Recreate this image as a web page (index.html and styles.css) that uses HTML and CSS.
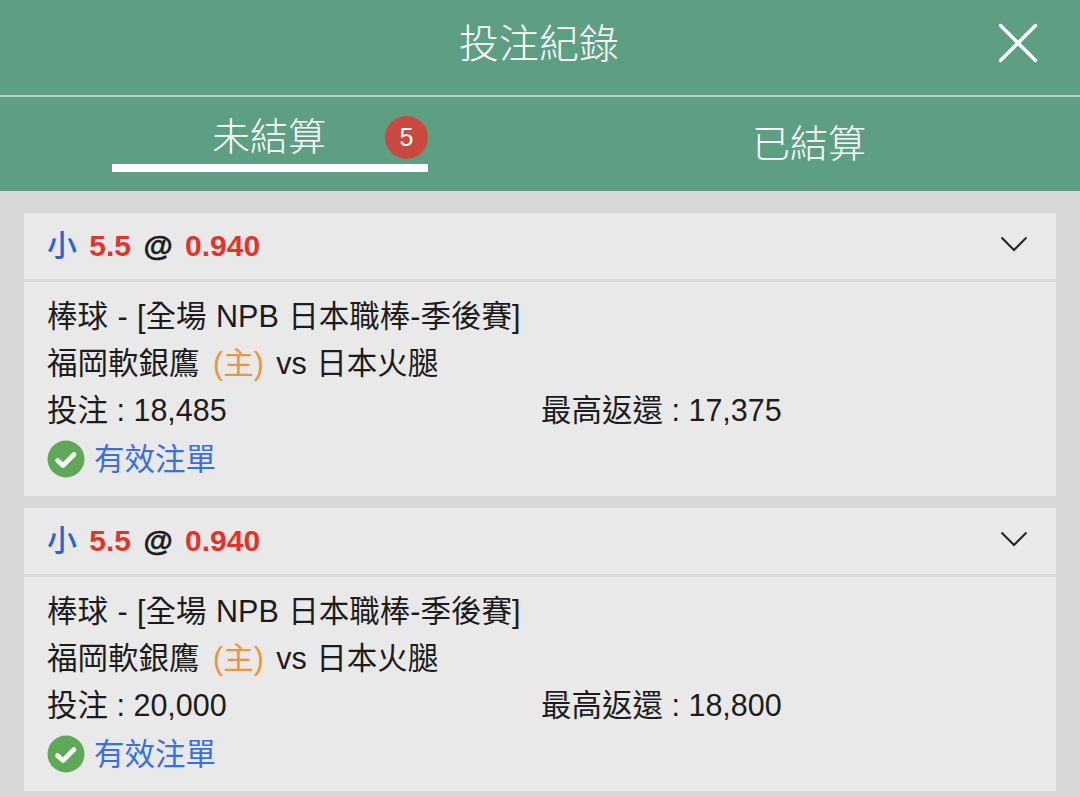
FILE: index.html
```html
<!DOCTYPE html>
<html lang="zh-Hant">
<head>
  <meta charset="UTF-8">
  <meta name="viewport" content="width=device-width, initial-scale=1.0">
  <title>投注紀錄</title>
  <link rel="stylesheet" href="styles.css">
</head>
<body>
  <header class="top-bar">
    <h1 class="top-title">投注紀錄</h1>
    <button class="close-btn" aria-label="close">
      <svg width="40" height="40" viewBox="0 0 40 40"><path d="M2.5 2.5L37.5 37.5M37.5 2.5L2.5 37.5" fill="none" stroke="#fff" stroke-width="3.4" stroke-linecap="round"/></svg>
    </button>
  </header>

  <nav class="tabs">
    <div class="tab-half">
      <div class="tab tab-active">未結算<span class="badge">5</span></div>
    </div>
    <div class="tab-half">
      <div class="tab">已結算</div>
    </div>
  </nav>

  <main class="list">
    <section class="card">
      <div class="card-head">
        <div class="odds"><span class="side">小</span> <b class="red">5.5</b> <b class="at">@</b> <b class="red">0.940</b></div>
        <svg class="chevron" width="28" height="16" viewBox="0 0 28 16"><path d="M1.5 1.5L14 14L26.5 1.5" fill="none" stroke="#222" stroke-width="2"/></svg>
      </div>
      <div class="card-body">
        <div class="row">棒球 - [全場 NPB 日本職棒-季後賽]</div>
        <div class="row">福岡軟銀鷹 <span class="home">(主)</span> vs 日本火腿</div>
        <div class="row row-money">
          <span>投注 : 18,485</span>
          <span>最高返還 : 17,375</span>
        </div>
        <div class="status">
          <svg width="38" height="38" viewBox="0 0 38 38"><circle cx="19" cy="19" r="18.5" fill="#5fa858"/><path d="M10.5 20.5L16 25.5L27 14.5" fill="none" stroke="#fff" stroke-width="4.6" stroke-linecap="round" stroke-linejoin="round"/></svg>
          有效注單
        </div>
      </div>
    </section>

    <section class="card">
      <div class="card-head">
        <div class="odds"><span class="side">小</span> <b class="red">5.5</b> <b class="at">@</b> <b class="red">0.940</b></div>
        <svg class="chevron" width="28" height="16" viewBox="0 0 28 16"><path d="M1.5 1.5L14 14L26.5 1.5" fill="none" stroke="#222" stroke-width="2"/></svg>
      </div>
      <div class="card-body">
        <div class="row">棒球 - [全場 NPB 日本職棒-季後賽]</div>
        <div class="row">福岡軟銀鷹 <span class="home">(主)</span> vs 日本火腿</div>
        <div class="row row-money">
          <span>投注 : 20,000</span>
          <span>最高返還 : 18,800</span>
        </div>
        <div class="status">
          <svg width="38" height="38" viewBox="0 0 38 38"><circle cx="19" cy="19" r="18.5" fill="#5fa858"/><path d="M10.5 20.5L16 25.5L27 14.5" fill="none" stroke="#fff" stroke-width="4.6" stroke-linecap="round" stroke-linejoin="round"/></svg>
          有效注單
        </div>
      </div>
    </section>
  </main>
</body>
</html>
```

FILE: styles.css
```css
html, body {
  height: 100%;
}

body {
  margin: 0;
  overflow: hidden;
  background: #d8d8d8;
  color: #1c1c1c;
  font-family: "Liberation Sans", "Noto Sans CJK TC", sans-serif;
}

.top-bar {
  height: 95px;
  display: flex;
  align-items: center;
  justify-content: center;
  position: relative;
  background: #5e9f83;
  border-bottom: 2px solid #b5cfc3;
}

.top-title {
  margin: 0 2px 14px 0;
  color: #fff;
  font-size: 40px;
  font-weight: 300;
}

.close-btn {
  position: absolute;
  top: 23px;
  right: 42px;
  padding: 0;
  border: none;
  background: none;
  line-height: 0;
}

.tabs {
  height: 94px;
  display: flex;
  background: #5e9f83;
}

.tab-half {
  width: 50%;
  display: flex;
  justify-content: center;
}

.tab {
  width: 316px;
  height: 67px;
  position: relative;
  text-align: center;
  text-indent: -2px;
  color: #fff;
  font-size: 38px;
  font-weight: 300;
  line-height: 94px;
}

.tab-active {
  line-height: 80px;
  border-bottom: 8px solid #fff;
}

.badge {
  position: absolute;
  top: 19px;
  right: 0;
  width: 43px;
  height: 43px;
  border-radius: 50%;
  background: #c9483f;
  font-size: 25px;
  line-height: 43px;
  text-indent: 0;
}

.list {
  display: flex;
  flex-direction: column;
  gap: 12px;
  padding: 22px 24px 0;
}

.card {
  background: #e9e9e9;
}

.card-head {
  height: 66px;
  display: flex;
  align-items: center;
  justify-content: space-between;
  padding: 0 28px 0 23px;
  border-bottom: 3px solid #d8d8d8;
}

.odds {
  margin-bottom: 6px;
  font-size: 30px;
  word-spacing: 4px;
}

.side {
  color: #2f62d0;
  font-weight: 500;
}

.red {
  color: #e0352b;
}

.at {
  -webkit-text-stroke: 0.5px #1c1c1c;
}

.chevron {
  margin-bottom: 5px;
}

.card-body {
  padding: 11px 23px 0;
  height: 203px;
  font-size: 30.5px;
}

.row {
  height: 47px;
  line-height: 47px;
  white-space: nowrap;
  word-spacing: 1px;
}

.home {
  margin: 0 3px 0 4px;
  color: #e8963f;
}

.row-money {
  display: grid;
  grid-template-columns: 494px 1fr;
  word-spacing: 0;
}

.status {
  display: flex;
  align-items: center;
  gap: 9px;
  height: 46px;
  color: #3b6fdc;
}

.status svg {
  margin-top: 4px;
}
```
